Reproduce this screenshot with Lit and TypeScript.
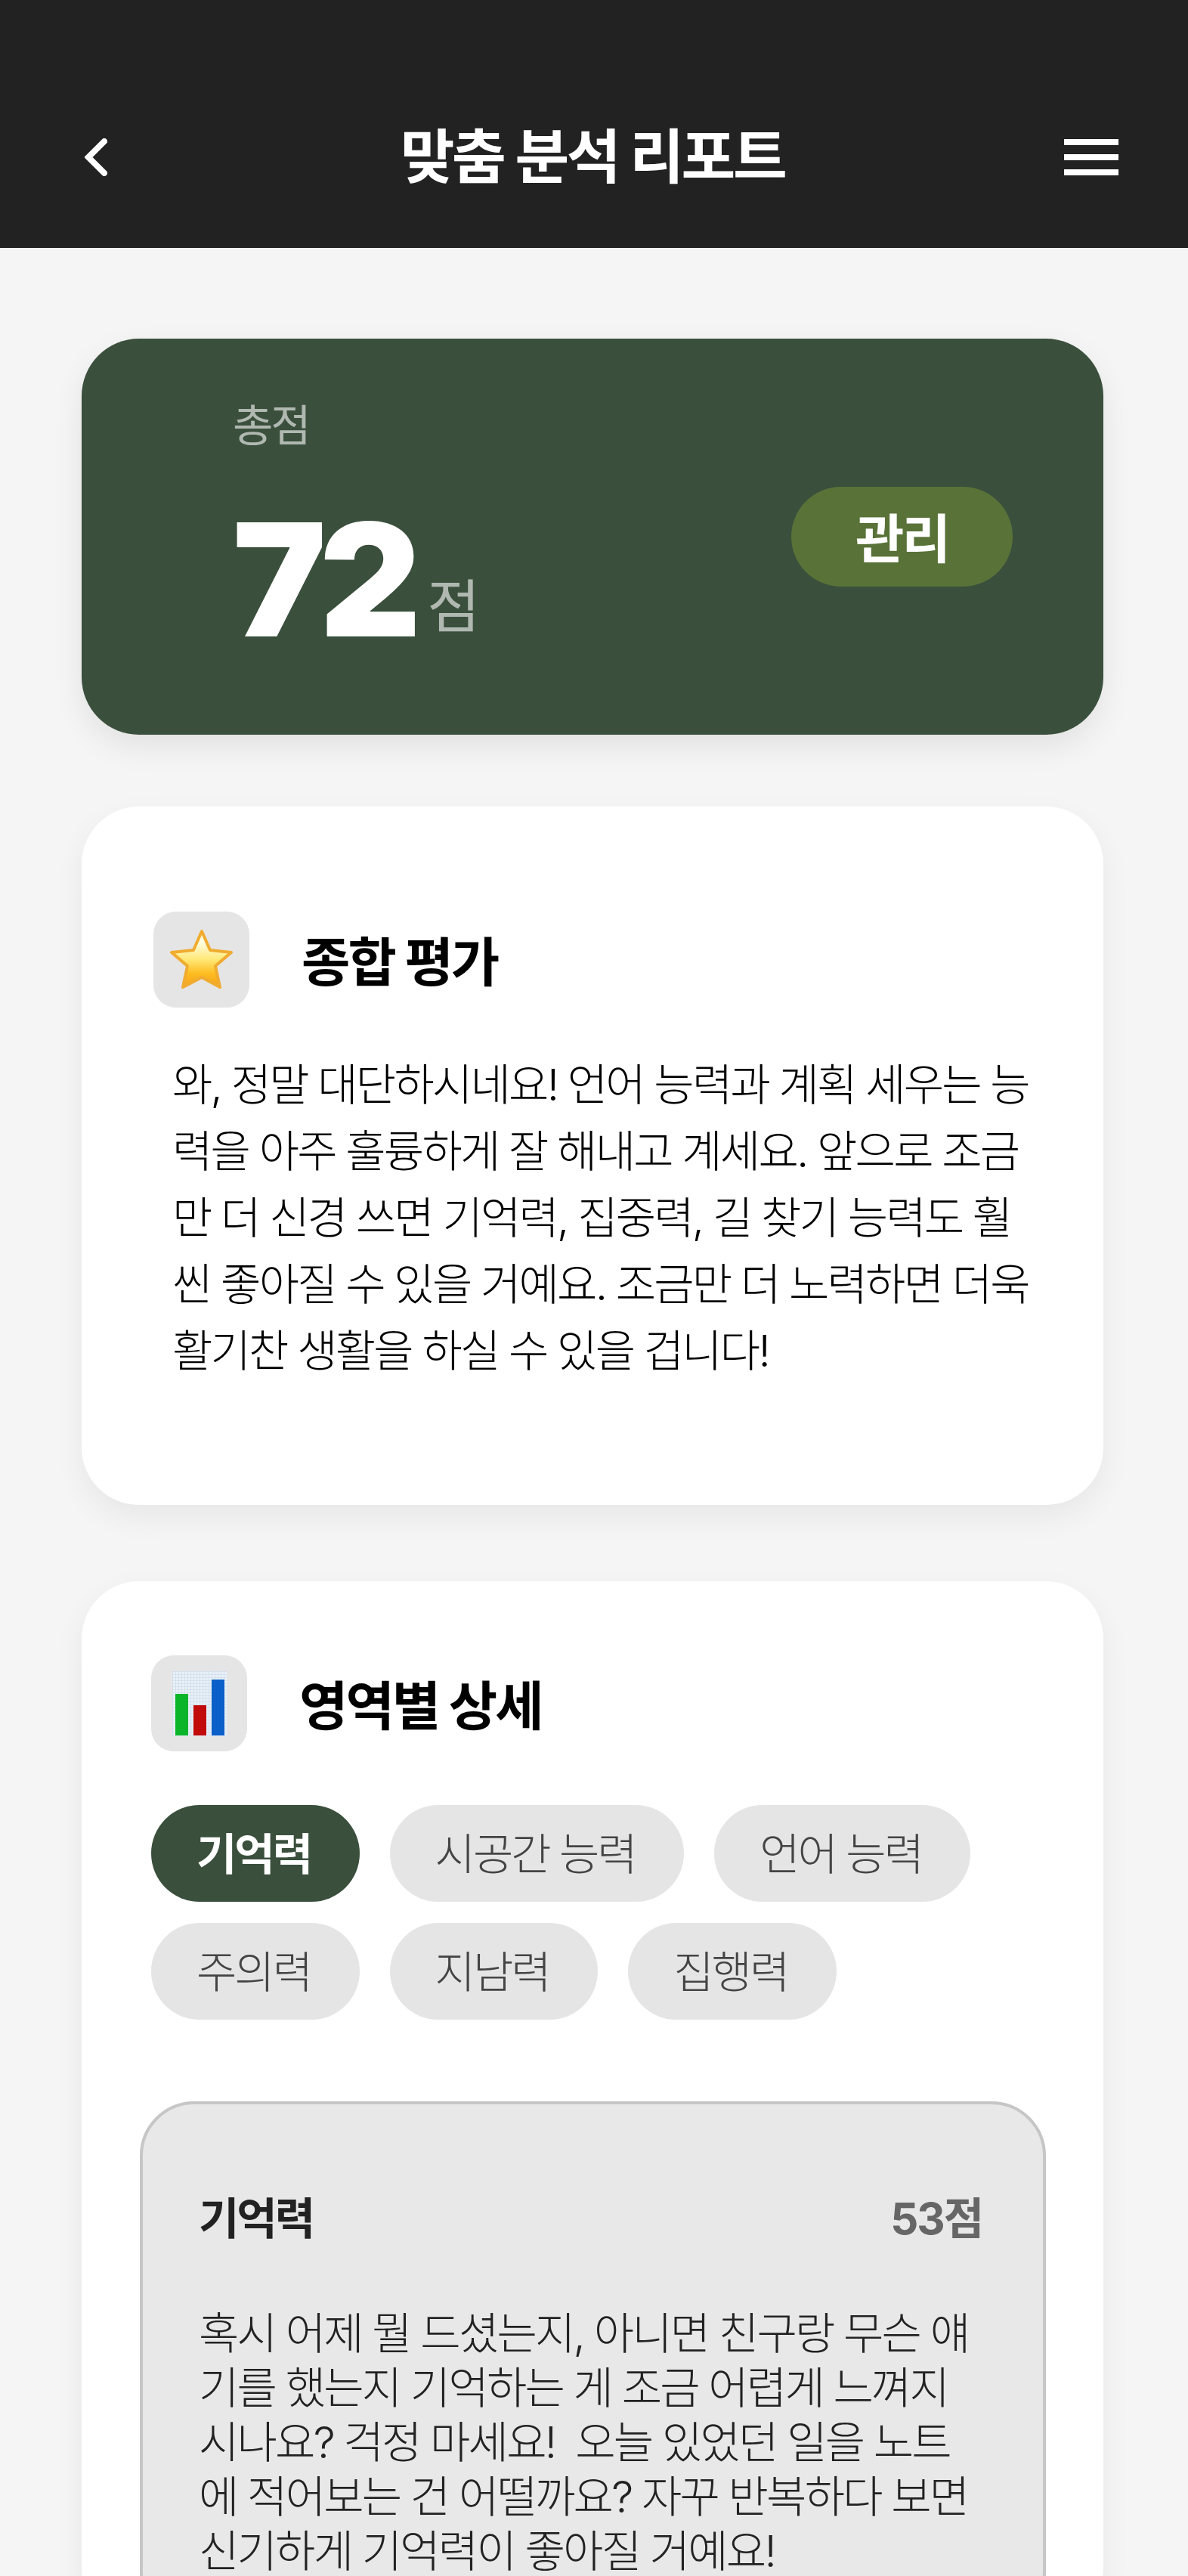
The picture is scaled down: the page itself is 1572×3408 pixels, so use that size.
import { LitElement, html, css } from "lit";
import { customElement } from "lit/decorators.js";

const SUMMARY = [
  "와, 정말 대단하시네요! 언어 능력과 계획 세우는 능",
  "력을 아주 훌륭하게 잘 해내고 계세요. 앞으로 조금",
  "만 더 신경 쓰면 기억력, 집중력, 길 찾기 능력도 훨",
  "씬 좋아질 수 있을 거예요. 조금만 더 노력하면 더욱",
  "활기찬 생활을 하실 수 있을 겁니다!",
];
const DETAIL = [
  "혹시 어제 뭘 드셨는지, 아니면 친구랑 무슨 얘",
  "기를 했는지 기억하는 게 조금 어렵게 느껴지",
  "시나요? 걱정 마세요!\u00a0 오늘 있었던 일을 노트",
  "에 적어보는 건 어떨까요? 자꾸 반복하다 보면",
  "신기하게 기억력이 좋아질 거예요!",
];
const CHIPS = ["기억력", "시공간 능력", "언어 능력", "주의력", "지남력", "집행력"];

@customElement("app-root")
export class AppRoot extends LitElement {
  static styles = css`
    :host {
      display: block;
      height: 100vh;
      overflow: hidden;
      background: #f5f5f5;
      font-family: "Inter", "Noto Sans CJK KR", sans-serif;
      color: #000;
    }
    .header {
      height: 328px;
      box-sizing: border-box;
      background: #222222;
      padding: 148px 92px 0 112px;
      display: flex;
      justify-content: space-between;
      align-items: flex-start;
    }
    .back { width: 30px; height: 50px; margin: 35px 18px 0 0; display: block; }
    .title {
      font-size: 78px;
      font-weight: 700;
      line-height: 120px;
      letter-spacing: -3.4px;
      color: #fff;
    }
    .menu {
      width: 72px;
      margin-top: 36px;
      display: flex;
      flex-direction: column;
      gap: 12px;
    }
    .menu i { display: block; height: 8px; background: #fff; }
    .main {
      padding: 120px 112px 0 108px;
      display: flex;
      flex-direction: column;
    }
    .hero {
      height: 524px;
      box-sizing: border-box;
      background: #3a4f3c;
      border-radius: 76px;
      box-shadow: 0 16px 40px rgba(0, 0, 0, 0.08);
      padding: 0 120px 0 200px;
      display: flex;
      justify-content: space-between;
      align-items: center;
      margin-bottom: 95px;
    }
    .score-box { align-self: flex-start; padding-top: 75px; }
    .score-label {
      font-size: 58px;
      line-height: 80px;
      letter-spacing: -3px;
      color: rgba(255, 255, 255, 0.6);
    }
    .score {
      display: flex;
      align-items: flex-end;
      margin-top: 43px;
    }
    .score b {
      font-size: 208px;
      font-weight: 900;
      line-height: 240px;
      letter-spacing: -9px;
      color: #fff;
    }
    .score span {
      font-size: 76px;
      line-height: 80px;
      letter-spacing: -2px;
      color: rgba(255, 255, 255, 0.6);
      margin: 0 0 44px 17px;
    }
    .manage {
      width: 293px;
      height: 132px;
      box-sizing: border-box;
      padding-bottom: 4px;
      border-radius: 66px;
      background: #597238;
      color: #fff;
      font-size: 70px;
      font-weight: 700;
      letter-spacing: -3px;
      display: flex;
      align-items: center;
      justify-content: center;
    }
    .card {
      background: #fff;
      border-radius: 76px;
      box-shadow: 0 16px 40px rgba(0, 0, 0, 0.06);
    }
    .summary { padding: 139px 0 160px 95px; margin-bottom: 101px; }
    .areas { padding: 98px 0 0 92px; }
    .head { display: flex; align-items: center; gap: 69px; }
    .icon {
      width: 127px;
      height: 127px;
      border-radius: 30px;
      background: #e6e5e6;
      display: flex;
      align-items: center;
      justify-content: center;
    }
    .head h2 {
      margin: 0;
      padding-top: 8px;
      font-size: 70px;
      font-weight: 700;
      letter-spacing: -3px;
      line-height: 100px;
    }
    .summary p {
      margin: 58px 0 0 25px;
      font-size: 58px;
      font-weight: 300;
      line-height: 88px;
      letter-spacing: -2.8px;
      white-space: nowrap;
    }
    .chips {
      display: flex;
      flex-wrap: wrap;
      gap: 28px 40px;
      margin-top: 71px;
      width: 1200px;
    }
    .chip {
      height: 128px;
      box-sizing: border-box;
      padding: 0 64.5px 6px 60px;
      border-radius: 64px;
      background: #e6e5e6;
      color: #444;
      font-size: 58px;
      font-weight: 300;
      letter-spacing: -3px;
      display: flex;
      align-items: center;
    }
    .chip.on { background: #3a4f3c; color: #fff; font-weight: 700; }
    .box {
      margin: 108px 0 0 -15px;
      width: 1199px;
      box-sizing: border-box;
      border: 4px solid #c6c6c6;
      border-radius: 72px;
      background: #e9e8e9;
      padding: 114px 80px 60px 74px;
    }
    .box-head {
      display: flex;
      justify-content: space-between;
      font-size: 58px;
      font-weight: 700;
      line-height: 74px;
      letter-spacing: -3px;
      color: #222;
    }
    .box-head span { color: #666; letter-spacing: -2px; }
    .box p {
      margin: 79px 0 0;
      font-size: 58px;
      font-weight: 300;
      line-height: 72px;
      letter-spacing: -2.8px;
      color: #222;
      white-space: nowrap;
    }
  `;

  private lines(rows: string[]) {
    return rows.map((r, i) => (i ? html`<br />${r}` : r));
  }

  render() {
    return html`
      <div class="header">
        <svg class="back" viewBox="0 0 30 50" fill="none" stroke="#fff" stroke-width="8" stroke-linecap="round" stroke-linejoin="miter">
          <path d="M26 4 L5 25 L26 46" />
        </svg>
        <div class="title">맞춤 분석 리포트</div>
        <div class="menu"><i></i><i></i><i></i></div>
      </div>
      <div class="main">
        <section class="hero">
          <div class="score-box">
            <div class="score-label">총점</div>
            <div class="score"><b>72</b><span>점</span></div>
          </div>
          <div class="manage">관리</div>
        </section>
        <section class="card summary">
          <div class="head">
            <div class="icon">
              <svg width="88" height="84" viewBox="-2 -2 88 84">
                <defs>
                  <linearGradient id="s" x1="0" y1="0" x2="0" y2="1">
                    <stop offset="0.2" stop-color="#fffce0" />
                    <stop offset="0.5" stop-color="#ffe978" />
                    <stop offset="0.75" stop-color="#fdbd22" />
                    <stop offset="1" stop-color="#f3a01b" />
                  </linearGradient>
                </defs>
                <path d="M42 2 L53 27 L81 30 L60 48 L66 76 L42 63 L17 76 L23 48 L2 30 L31 27 Z" fill="url(#s)" stroke="#f0ac30" stroke-width="4" stroke-linejoin="round" />
              </svg>
            </div>
            <h2>종합 평가</h2>
          </div>
          <p>${this.lines(SUMMARY)}</p>
        </section>
        <section class="card areas">
          <div class="head">
            <div class="icon">
              <svg width="72" height="86" viewBox="0 0 72 86">
                <defs>
                  <pattern id="g" width="4" height="4" patternUnits="userSpaceOnUse">
                    <rect width="4" height="4" fill="#e8f0f8" />
                    <path d="M0 0H4M0 0V4" stroke="#c4d4e4" stroke-width="1" />
                  </pattern>
                </defs>
                <rect x="0" y="0" width="72" height="86" fill="url(#g)" />
                <rect x="4" y="30" width="17" height="55" fill="#0ab52a" />
                <rect x="28" y="45" width="17" height="40" fill="#c10a0a" />
                <rect x="52" y="11" width="17" height="74" fill="#0a5fc8" />
              </svg>
            </div>
            <h2>영역별 상세</h2>
          </div>
          <div class="chips">
            ${CHIPS.map((c, i) => html`<div class="chip ${i === 0 ? "on" : ""}">${c}</div>`)}
          </div>
          <div class="box">
            <div class="box-head"><div>기억력</div><span>53점</span></div>
            <p>${this.lines(DETAIL)}</p>
          </div>
        </section>
      </div>
    `;
  }
}
